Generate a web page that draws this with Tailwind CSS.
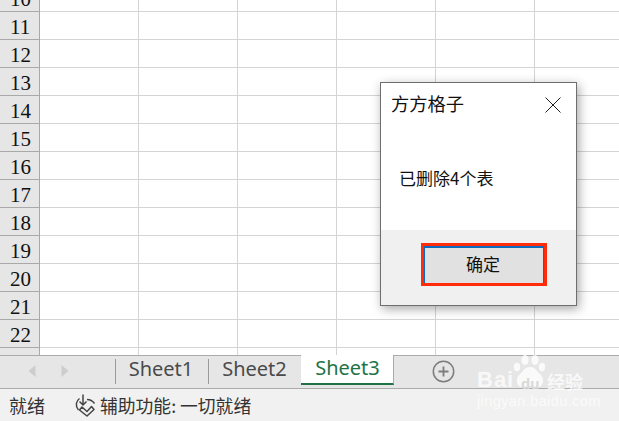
<!DOCTYPE html>
<html lang="zh">
<head>
<meta charset="utf-8">
<script src="https://cdn.jsdelivr.net/npm/@tailwindcss/browser@4"></script>
</head>
<body class="m-0 bg-white">
<div class="relative w-[619px] h-[421px] overflow-hidden flex flex-col bg-white font-['Noto_Sans_CJK_SC','Noto_Sans',sans-serif]">
  <!-- grid -->
  <div class="h-[355px] shrink-0 overflow-hidden">
    <div class="-mt-[16px] flex flex-col">
      <div class="flex h-[28px] border-b border-[#d4d4d4]"><div class="w-[40px] h-[28px] shrink-0 bg-[#e6e6e6] border-r border-b border-[#a9a9a9] pl-[10px] text-[21px] leading-[31px] text-[#111] font-['Liberation_Serif',serif]">10</div><div class="w-[99px] border-r border-[#d4d4d4]"></div><div class="w-[99px] border-r border-[#d4d4d4]"></div><div class="w-[99px] border-r border-[#d4d4d4]"></div><div class="w-[99px] border-r border-[#d4d4d4]"></div><div class="w-[99px] border-r border-[#d4d4d4]"></div></div>
      <div class="flex h-[28px] border-b border-[#d4d4d4]"><div class="w-[40px] h-[28px] shrink-0 bg-[#e6e6e6] border-r border-b border-[#a9a9a9] pl-[10px] text-[21px] leading-[31px] text-[#111] font-['Liberation_Serif',serif]">11</div><div class="w-[99px] border-r border-[#d4d4d4]"></div><div class="w-[99px] border-r border-[#d4d4d4]"></div><div class="w-[99px] border-r border-[#d4d4d4]"></div><div class="w-[99px] border-r border-[#d4d4d4]"></div><div class="w-[99px] border-r border-[#d4d4d4]"></div></div>
      <div class="flex h-[28px] border-b border-[#d4d4d4]"><div class="w-[40px] h-[28px] shrink-0 bg-[#e6e6e6] border-r border-b border-[#a9a9a9] pl-[10px] text-[21px] leading-[31px] text-[#111] font-['Liberation_Serif',serif]">12</div><div class="w-[99px] border-r border-[#d4d4d4]"></div><div class="w-[99px] border-r border-[#d4d4d4]"></div><div class="w-[99px] border-r border-[#d4d4d4]"></div><div class="w-[99px] border-r border-[#d4d4d4]"></div><div class="w-[99px] border-r border-[#d4d4d4]"></div></div>
      <div class="flex h-[28px] border-b border-[#d4d4d4]"><div class="w-[40px] h-[28px] shrink-0 bg-[#e6e6e6] border-r border-b border-[#a9a9a9] pl-[10px] text-[21px] leading-[31px] text-[#111] font-['Liberation_Serif',serif]">13</div><div class="w-[99px] border-r border-[#d4d4d4]"></div><div class="w-[99px] border-r border-[#d4d4d4]"></div><div class="w-[99px] border-r border-[#d4d4d4]"></div><div class="w-[99px] border-r border-[#d4d4d4]"></div><div class="w-[99px] border-r border-[#d4d4d4]"></div></div>
      <div class="flex h-[28px] border-b border-[#d4d4d4]"><div class="w-[40px] h-[28px] shrink-0 bg-[#e6e6e6] border-r border-b border-[#a9a9a9] pl-[10px] text-[21px] leading-[31px] text-[#111] font-['Liberation_Serif',serif]">14</div><div class="w-[99px] border-r border-[#d4d4d4]"></div><div class="w-[99px] border-r border-[#d4d4d4]"></div><div class="w-[99px] border-r border-[#d4d4d4]"></div><div class="w-[99px] border-r border-[#d4d4d4]"></div><div class="w-[99px] border-r border-[#d4d4d4]"></div></div>
      <div class="flex h-[28px] border-b border-[#d4d4d4]"><div class="w-[40px] h-[28px] shrink-0 bg-[#e6e6e6] border-r border-b border-[#a9a9a9] pl-[10px] text-[21px] leading-[31px] text-[#111] font-['Liberation_Serif',serif]">15</div><div class="w-[99px] border-r border-[#d4d4d4]"></div><div class="w-[99px] border-r border-[#d4d4d4]"></div><div class="w-[99px] border-r border-[#d4d4d4]"></div><div class="w-[99px] border-r border-[#d4d4d4]"></div><div class="w-[99px] border-r border-[#d4d4d4]"></div></div>
      <div class="flex h-[28px] border-b border-[#d4d4d4]"><div class="w-[40px] h-[28px] shrink-0 bg-[#e6e6e6] border-r border-b border-[#a9a9a9] pl-[10px] text-[21px] leading-[31px] text-[#111] font-['Liberation_Serif',serif]">16</div><div class="w-[99px] border-r border-[#d4d4d4]"></div><div class="w-[99px] border-r border-[#d4d4d4]"></div><div class="w-[99px] border-r border-[#d4d4d4]"></div><div class="w-[99px] border-r border-[#d4d4d4]"></div><div class="w-[99px] border-r border-[#d4d4d4]"></div></div>
      <div class="flex h-[28px] border-b border-[#d4d4d4]"><div class="w-[40px] h-[28px] shrink-0 bg-[#e6e6e6] border-r border-b border-[#a9a9a9] pl-[10px] text-[21px] leading-[31px] text-[#111] font-['Liberation_Serif',serif]">17</div><div class="w-[99px] border-r border-[#d4d4d4]"></div><div class="w-[99px] border-r border-[#d4d4d4]"></div><div class="w-[99px] border-r border-[#d4d4d4]"></div><div class="w-[99px] border-r border-[#d4d4d4]"></div><div class="w-[99px] border-r border-[#d4d4d4]"></div></div>
      <div class="flex h-[28px] border-b border-[#d4d4d4]"><div class="w-[40px] h-[28px] shrink-0 bg-[#e6e6e6] border-r border-b border-[#a9a9a9] pl-[10px] text-[21px] leading-[31px] text-[#111] font-['Liberation_Serif',serif]">18</div><div class="w-[99px] border-r border-[#d4d4d4]"></div><div class="w-[99px] border-r border-[#d4d4d4]"></div><div class="w-[99px] border-r border-[#d4d4d4]"></div><div class="w-[99px] border-r border-[#d4d4d4]"></div><div class="w-[99px] border-r border-[#d4d4d4]"></div></div>
      <div class="flex h-[28px] border-b border-[#d4d4d4]"><div class="w-[40px] h-[28px] shrink-0 bg-[#e6e6e6] border-r border-b border-[#a9a9a9] pl-[10px] text-[21px] leading-[31px] text-[#111] font-['Liberation_Serif',serif]">19</div><div class="w-[99px] border-r border-[#d4d4d4]"></div><div class="w-[99px] border-r border-[#d4d4d4]"></div><div class="w-[99px] border-r border-[#d4d4d4]"></div><div class="w-[99px] border-r border-[#d4d4d4]"></div><div class="w-[99px] border-r border-[#d4d4d4]"></div></div>
      <div class="flex h-[28px] border-b border-[#d4d4d4]"><div class="w-[40px] h-[28px] shrink-0 bg-[#e6e6e6] border-r border-b border-[#a9a9a9] pl-[10px] text-[21px] leading-[31px] text-[#111] font-['Liberation_Serif',serif]">20</div><div class="w-[99px] border-r border-[#d4d4d4]"></div><div class="w-[99px] border-r border-[#d4d4d4]"></div><div class="w-[99px] border-r border-[#d4d4d4]"></div><div class="w-[99px] border-r border-[#d4d4d4]"></div><div class="w-[99px] border-r border-[#d4d4d4]"></div></div>
      <div class="flex h-[28px] border-b border-[#d4d4d4]"><div class="w-[40px] h-[28px] shrink-0 bg-[#e6e6e6] border-r border-b border-[#a9a9a9] pl-[10px] text-[21px] leading-[31px] text-[#111] font-['Liberation_Serif',serif]">21</div><div class="w-[99px] border-r border-[#d4d4d4]"></div><div class="w-[99px] border-r border-[#d4d4d4]"></div><div class="w-[99px] border-r border-[#d4d4d4]"></div><div class="w-[99px] border-r border-[#d4d4d4]"></div><div class="w-[99px] border-r border-[#d4d4d4]"></div></div>
      <div class="flex h-[28px] border-b border-[#d4d4d4]"><div class="w-[40px] h-[28px] shrink-0 bg-[#e6e6e6] border-r border-b border-[#a9a9a9] pl-[10px] text-[21px] leading-[31px] text-[#111] font-['Liberation_Serif',serif]">22</div><div class="w-[99px] border-r border-[#d4d4d4]"></div><div class="w-[99px] border-r border-[#d4d4d4]"></div><div class="w-[99px] border-r border-[#d4d4d4]"></div><div class="w-[99px] border-r border-[#d4d4d4]"></div><div class="w-[99px] border-r border-[#d4d4d4]"></div></div>
      <div class="flex h-[28px]"><div class="w-[40px] shrink-0 bg-[#e6e6e6] border-r border-[#a9a9a9]"></div><div class="w-[99px] border-r border-[#d4d4d4]"></div><div class="w-[99px] border-r border-[#d4d4d4]"></div><div class="w-[99px] border-r border-[#d4d4d4]"></div><div class="w-[99px] border-r border-[#d4d4d4]"></div><div class="w-[99px] border-r border-[#d4d4d4]"></div></div>
    </div>
  </div>

  <!-- sheet tabs -->
  <div class="h-[34px] shrink-0 flex bg-[#e6e6e6] border-t border-b border-[#ababab] text-[20px] leading-[26px] text-[#4a4a4a] font-['Noto_Sans',sans-serif]">
    <div class="w-[115px] flex items-center gap-[25px] pl-[28px] pb-[2px]">
      <svg width="8" height="12" viewBox="0 0 8 12"><path d="M7.5 0 L0.5 6 L7.5 12 Z" fill="#cdcdcd"/></svg>
      <svg width="8" height="12" viewBox="0 0 8 12"><path d="M0.5 0 L7.5 6 L0.5 12 Z" fill="#cdcdcd"/></svg>
    </div>
    <div class="w-[93px] h-[25px] mt-[3px] flex items-center justify-center border-l border-[#9a9a9a]"><span class="-mt-[5px] -ml-[2px]">Sheet1</span></div>
    <div class="w-[93px] h-[25px] mt-[3px] flex items-center justify-center border-l border-[#9a9a9a]"><span class="-mt-[5px] -ml-[1px]">Sheet2</span></div>
    <div class="w-[93px] -mt-px h-[30px] flex items-center justify-center bg-white border-r border-[#ababab] border-b-[2px] border-b-[#217346] text-[#217346]"><span class="ml-[1px] -mt-[2px]">Sheet3</span></div>
    <div class="ml-[38px] flex items-center pb-[1px]">
      <svg width="23" height="23" viewBox="0 0 23 23" fill="none"><circle cx="11.5" cy="11.5" r="10.2" stroke="#7d7d7d" stroke-width="1.5"/><path d="M6.5 11.5 H16.5 M11.5 6.5 V16.5" stroke="#7d7d7d" stroke-width="1.8"/></svg>
    </div>
  </div>

  <!-- status bar -->
  <div class="flex-1 flex items-center bg-[#f1f1f1] text-[18px] text-[#333] pl-[10px]">
    <span class="w-[66px] -ml-px mr-px">就绪</span>
    <svg width="21" height="23" viewBox="0 0 21 23" fill="none" class="mr-[4px] -ml-px" stroke="#444" stroke-width="1.5"><path d="M4.5 4.5 C1 7 0 12 3.5 16"/><path d="M12 5.5 C14 5.5 17 6 19.5 9.5"/><path d="M8 0.5 V11 M4.5 7.5 L8 11 L11.5 7.5"/><path d="M4.5 16 L7 13 L12 17.5 L16.5 12.5 L19 15.5 L12 22 Z" stroke-linejoin="round"/></svg>
    <span class="text-[17.8px]">辅助功能: 一切就绪</span>
  </div>

  <!-- dialog -->
  <div class="absolute left-[380px] top-[82px] w-[197px] h-[224px] bg-white border border-[#6e6e6e] shadow-[2px_3px_10px_rgba(0,0,0,0.35)] flex flex-col">
    <div class="flex items-center justify-between pl-[10px] pr-[16px] h-[41px] text-[18.3px] text-[#111]">
      <span>方方格子</span>
      <svg width="16" height="16" viewBox="0 0 16 16" fill="none" class="mt-[2px] -mr-px"><path d="M0.5 0.5 L15.5 15.5 M15.5 0.5 L0.5 15.5" stroke="#222" stroke-width="1"/></svg>
    </div>
    <div class="flex-1 pl-[18px] pt-[41px] text-[17px] leading-[26px] text-[#111]">已删除4个表</div>
    <div class="h-[75px] bg-[#f0f0f0] flex items-start justify-start pl-[40px] pt-[13px]">
      <button class="w-[126px] h-[43px] border-[3px] border-[#ff2c0c] bg-[#e1e1e1] text-[17px] text-[#111] shadow-[inset_0_1px_0_1px_#0a6ac0] pr-[2px] pb-[1px]">确定</button>
    </div>
  </div>

  <!-- watermark -->
  <div class="absolute left-[477px] top-[352px] w-[110px] h-[56px] pointer-events-none">
    <svg class="absolute left-[35px] top-0" width="36" height="37" viewBox="0 0 36 37" fill="#fff" fill-opacity="0.8">
      <ellipse cx="5" cy="15" rx="3.2" ry="4.2"/><ellipse cx="13" cy="8" rx="3.6" ry="5"/><ellipse cx="23" cy="8" rx="3.6" ry="5"/><ellipse cx="30" cy="15" rx="3.2" ry="4.2"/>
      <path d="M18 15 C24 15 25 20 29 23 C33 27 31 35 26 35 C22 35 21 34 18 34 C15 34 13 35 10 35 C5 35 3 27 7 23 C11 20 12 15 18 15 Z"/>
    </svg>
    <div class="absolute left-0 top-[15px] text-[22px] leading-[26px] font-bold font-['Liberation_Sans',sans-serif] text-white/75 tracking-[1px]">Bai</div>
    <div class="absolute left-[44px] top-[24px] text-[15px] leading-[15px] font-bold font-['Liberation_Sans',sans-serif] text-[#d8d8d8]">du</div>
    <div class="absolute left-[70px] top-[18px] text-[18px] leading-[22px] font-bold text-white/75">经验</div>
    <div class="absolute left-0 top-[40px] text-[14.5px] leading-[18px] tracking-[0.4px] text-white/70 font-['Liberation_Sans',sans-serif]">jingyan.baidu.com</div>
  </div>
</div>
</body>
</html>
